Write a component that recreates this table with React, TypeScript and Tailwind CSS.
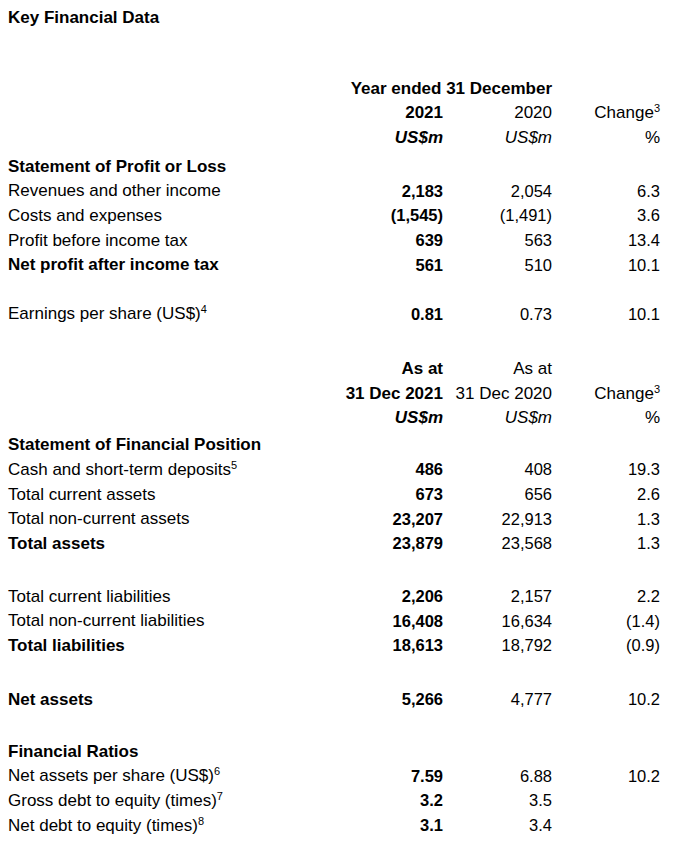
import React from "react";

type Row = {
  label: string;
  sup?: string;
  a: string;
  b: string;
  c?: string;
  bold?: boolean;
  gap?: string;
};

const Sup = ({ children }: { children: React.ReactNode }) => (
  <sup className="text-[11px] -top-[6px]">{children}</sup>
);

const grid = "grid grid-cols-[325px_110px_109px_108px] h-[24.6px] items-center";

const HeaderRow = ({ a, b, c, aBold = true, italic = false, sup }: { a: string; b: string; c?: string; aBold?: boolean; italic?: boolean; sup?: boolean }) => (
  <div className={grid}>
    <div />
    <div className={`text-right ${aBold ? "font-bold" : ""} ${italic ? "italic" : ""}`}>{a}</div>
    <div className={`text-right ${italic ? "italic" : ""}`}>{b}</div>
    <div className="text-right">
      {c}
      {sup && <Sup>3</Sup>}
    </div>
  </div>
);

const DataRow = ({ row }: { row: Row }) => (
  <div className={`${grid} ${row.gap ?? ""}`}>
    <div className={row.bold ? "font-bold" : ""}>
      {row.label}
      {row.sup && <Sup>{row.sup}</Sup>}
    </div>
    <div className="text-right font-bold text-[16.5px]">{row.a}</div>
    <div className="text-right text-[16.5px]">{row.b}</div>
    <div className="text-right text-[16.5px]">{row.c}</div>
  </div>
);

const Section = ({ title, gap }: { title: string; gap: string }) => (
  <div className={`${grid} ${gap}`}>
    <div className="font-bold">{title}</div>
  </div>
);

const profitRows: Row[] = [
  { label: "Revenues and other income", a: "2,183", b: "2,054", c: "6.3" },
  { label: "Costs and expenses", a: "(1,545)", b: "(1,491)", c: "3.6" },
  { label: "Profit before income tax", a: "639", b: "563", c: "13.4" },
  { label: "Net profit after income tax", a: "561", b: "510", c: "10.1", bold: true },
  { label: "Earnings per share (US$)", sup: "4", a: "0.81", b: "0.73", c: "10.1", gap: "mt-[24.4px]" },
];

const assetRows: Row[] = [
  { label: "Cash and short-term deposits", sup: "5", a: "486", b: "408", c: "19.3" },
  { label: "Total current assets", a: "673", b: "656", c: "2.6" },
  { label: "Total non-current assets", a: "23,207", b: "22,913", c: "1.3" },
  { label: "Total assets", a: "23,879", b: "23,568", c: "1.3", bold: true },
  { label: "Total current liabilities", a: "2,206", b: "2,157", c: "2.2", gap: "mt-[28.4px]" },
  { label: "Total non-current liabilities", a: "16,408", b: "16,634", c: "(1.4)" },
  { label: "Total liabilities", a: "18,613", b: "18,792", c: "(0.9)", bold: true },
  { label: "Net assets", a: "5,266", b: "4,777", c: "10.2", bold: true, gap: "mt-[29.4px]" },
];

const ratioRows: Row[] = [
  { label: "Net assets per share (US$)", sup: "6", a: "7.59", b: "6.88", c: "10.2" },
  { label: "Gross debt to equity (times)", sup: "7", a: "3.2", b: "3.5" },
  { label: "Net debt to equity (times)", sup: "8", a: "3.1", b: "3.4" },
];

export default function App() {
  return (
    <div className="w-[687px] h-[867px] bg-white text-black pl-[8px] pt-[6px] text-[17px] font-['Liberation_Sans',Arial,sans-serif]">
      <h1 className="font-bold text-[17px] leading-[24px]">Key Financial Data</h1>

      <div className="mt-[45.7px]">
        <div className={grid}>
          <div />
          <div className="col-span-2 text-right font-bold">Year ended 31 December</div>
        </div>
        <HeaderRow a="2021" b="2020" c="Change" sup />
        <HeaderRow a="US$m" b="US$m" c="%" italic />
      </div>

      <Section title="Statement of Profit or Loss" gap="mt-[4.4px]" />
      {profitRows.map((r) => (
        <DataRow key={r.label} row={r} />
      ))}

      <div className="mt-[30.4px]">
        <HeaderRow a="As at" b="As at" />
        <HeaderRow a="31 Dec 2021" b="31 Dec 2020" c="Change" sup />
        <HeaderRow a="US$m" b="US$m" c="%" italic />
      </div>

      <Section title="Statement of Financial Position" gap="mt-[2.4px]" />
      {assetRows.map((r) => (
        <DataRow key={r.label} row={r} />
      ))}

      <Section title="Financial Ratios" gap="mt-[27.4px]" />
      {ratioRows.map((r) => (
        <DataRow key={r.label} row={r} />
      ))}
    </div>
  );
}
